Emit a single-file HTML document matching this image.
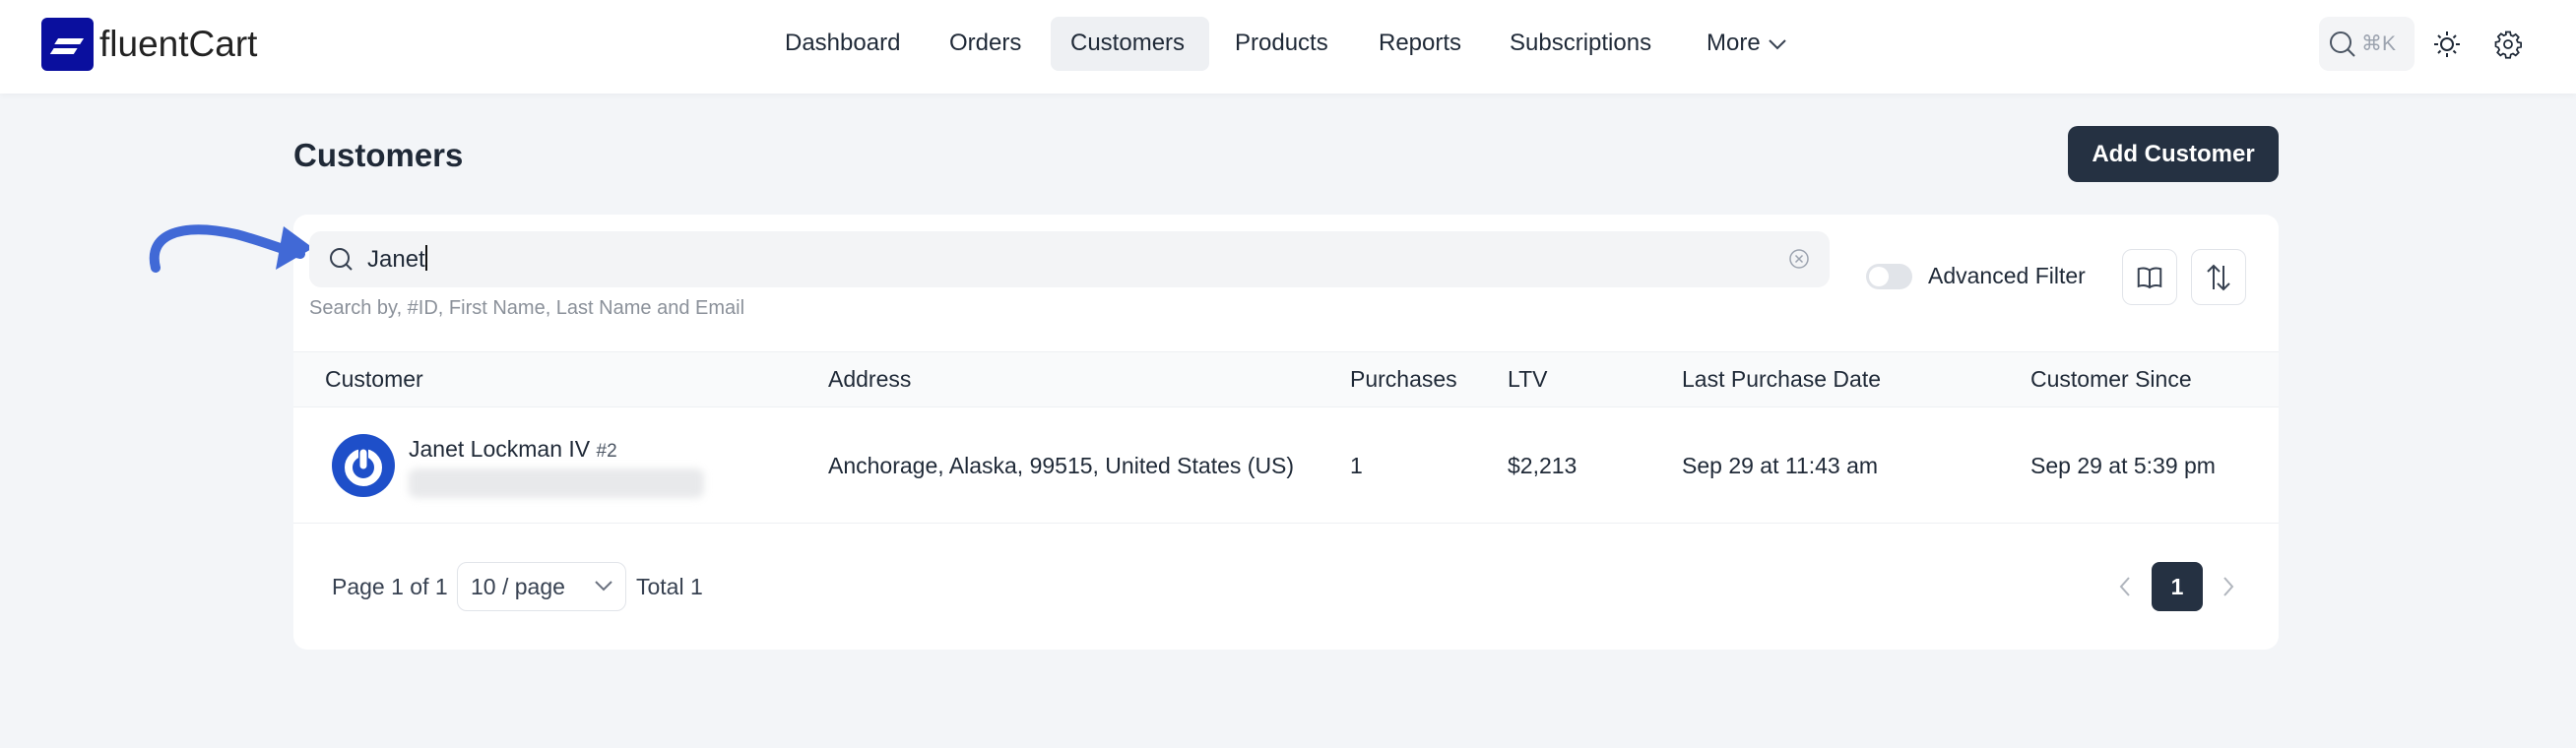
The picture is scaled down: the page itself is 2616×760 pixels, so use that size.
<!DOCTYPE html>
<html><head><meta charset="utf-8"><style>
*{box-sizing:border-box;margin:0;padding:0}
body{width:2616px;height:760px;background:#f3f5f8;font-family:"Liberation Sans",sans-serif;color:#1f2937;position:relative;overflow:hidden}
.abs{position:absolute}
.hdr{left:0;top:0;width:2616px;height:95px;background:#fff;box-shadow:0 2px 6px rgba(0,0,0,.04)}
.nav{font-size:24px;color:#1f2937;top:30px;white-space:nowrap}
.card{left:298px;top:218px;width:2016px;height:442px;background:#fff;border-radius:14px}
.th{font-size:23px;color:#1f2937;top:372px}
.td{font-size:23px;color:#1f2937;top:460px}
</style></head><body>
<div class="abs hdr"></div>
<div class="abs" style="left:42px;top:18px;width:53px;height:54px;background:#0a0f9e;border-radius:6px">
<svg width="53" height="54" viewBox="0 0 53 54"><path d="M14 21 L40 21 L37 27 L11 27Z M11 31 L35 31 L32 37 L8 37Z" fill="#fff" transform="skewX(-8) translate(6,0)"/></svg></div>
<div class="abs" style="left:101px;top:24px;font-size:37px;color:#222">fluent<span style="font-weight:normal">Cart</span></div>
<div class="abs nav" style="left:797px">Dashboard</div>
<div class="abs nav" style="left:964px">Orders</div>
<div class="abs" style="left:1067px;top:17px;width:161px;height:55px;background:#eef0f3;border-radius:8px"></div>
<div class="abs nav" style="left:1087px">Customers</div>
<div class="abs nav" style="left:1254px">Products</div>
<div class="abs nav" style="left:1400px">Reports</div>
<div class="abs nav" style="left:1533px">Subscriptions</div>
<div class="abs nav" style="left:1733px">More</div>
<svg class="abs" style="left:1795px;top:38px" width="20" height="14"><path d="M2 3 L10 11 L18 3" fill="none" stroke="#374151" stroke-width="2"/></svg>
<div class="abs" style="left:2355px;top:17px;width:97px;height:55px;background:#f3f4f6;border-radius:10px"></div>
<svg class="abs" style="left:2364px;top:30px" width="30" height="30"><circle cx="13" cy="13" r="10" fill="none" stroke="#4b5563" stroke-width="2"/><path d="M20 20 L27 27" stroke="#4b5563" stroke-width="2"/></svg>
<div class="abs" style="left:2398px;top:32px;font-size:21px;color:#9ca3af">⌘K</div>
<svg class="abs" style="left:2470px;top:30px" width="30" height="30"><circle cx="15" cy="15" r="6" fill="none" stroke="#1f2937" stroke-width="2"/><g stroke="#1f2937" stroke-width="2"><path d="M15 2v4M15 24v4M2 15h4M24 15h4M6 6l2.5 2.5M21.5 21.5L24 24M6 24l2.5-2.5M21.5 8.5L24 6"/></g></svg>
<svg class="abs" style="left:2532px;top:30px" width="30" height="30" viewBox="0 0 24 24"><path d="M10.3 2h3.4l.5 2.6 1.8.8 2.2-1.5 2.4 2.4-1.5 2.2.8 1.8 2.6.5v3.4l-2.6.5-.8 1.8 1.5 2.2-2.4 2.4-2.2-1.5-1.8.8-.5 2.6h-3.4l-.5-2.6-1.8-.8-2.2 1.5-2.4-2.4 1.5-2.2-.8-1.8L2 13.7v-3.4l2.6-.5.8-1.8-1.5-2.2 2.4-2.4 2.2 1.5 1.8-.8z" fill="none" stroke="#1f2937" stroke-width="1.4"/><circle cx="12" cy="12" r="3.2" fill="none" stroke="#1f2937" stroke-width="1.4"/></svg>

<div class="abs" style="left:298px;top:139px;font-size:33px;font-weight:bold;color:#1f2937">Customers</div>
<div class="abs" style="left:2100px;top:128px;width:214px;height:57px;background:#253142;border-radius:10px;color:#fff;font-size:24px;font-weight:bold;text-align:center;line-height:57px">Add Customer</div>

<div class="abs card"></div>
<svg class="abs" style="left:140px;top:210px" width="190" height="80"><path d="M18 62 C10 30 40 15 100 28 C130 36 150 45 165 48" fill="none" stroke="#4169d6" stroke-width="10" stroke-linecap="round"/><path d="M148 20 L178 42 L140 64Z" fill="#4169d6"/></svg>
<div class="abs" style="left:314px;top:235px;width:1544px;height:57px;background:#f3f4f6;border-radius:12px"></div>
<svg class="abs" style="left:332px;top:249px" width="30" height="30"><circle cx="13" cy="13" r="9" fill="none" stroke="#374151" stroke-width="2"/><path d="M19.5 19.5 L25 25" stroke="#374151" stroke-width="2"/></svg>
<div class="abs" style="left:373px;top:249px;font-size:24px;color:#1f2937">Janet<span style="display:inline-block;width:2px;height:26px;background:#111;vertical-align:-4px"></span></div>
<svg class="abs" style="left:1815px;top:251px" width="24" height="24"><circle cx="12" cy="12" r="9" fill="none" stroke="#9ca3af" stroke-width="1.5"/><path d="M8.5 8.5l7 7M15.5 8.5l-7 7" stroke="#9ca3af" stroke-width="1.5"/></svg>
<div class="abs" style="left:314px;top:302px;font-size:20px;color:#8b919a">Search by, #ID, First Name, Last Name and Email</div>
<div class="abs" style="left:1895px;top:268px;width:47px;height:26px;background:#e1e4e9;border-radius:13px"><div style="position:absolute;left:3px;top:3px;width:20px;height:20px;background:#fff;border-radius:50%"></div></div>
<div class="abs" style="left:1958px;top:267px;font-size:23px;color:#1f2937">Advanced Filter</div>
<div class="abs" style="left:2155px;top:253px;width:56px;height:57px;border:1px solid #e1e4e9;border-radius:10px"></div>
<svg class="abs" style="left:2168px;top:267px" width="30" height="30" viewBox="0 0 24 24"><path d="M12 6 C9 4 6 4 3 5 V19 C6 18 9 18 12 20 C15 18 18 18 21 19 V5 C18 4 15 4 12 6Z M12 6V20" fill="none" stroke="#374151" stroke-width="1.6"/></svg>
<div class="abs" style="left:2225px;top:253px;width:56px;height:57px;border:1px solid #e1e4e9;border-radius:10px"></div>
<svg class="abs" style="left:2238px;top:266px" width="30" height="32"><path d="M10 28V4M4 10l6-6 6 6M20 4v24M14 22l6 6 6-6" fill="none" stroke="#374151" stroke-width="2"/></svg>

<div class="abs" style="left:298px;top:357px;width:2016px;height:57px;background:#f9fafb;border-top:1px solid #eef0f3;border-bottom:1px solid #eef0f3"></div>
<div class="abs th" style="left:330px">Customer</div>
<div class="abs th" style="left:841px">Address</div>
<div class="abs th" style="left:1371px">Purchases</div>
<div class="abs th" style="left:1531px">LTV</div>
<div class="abs th" style="left:1708px">Last Purchase Date</div>
<div class="abs th" style="left:2062px">Customer Since</div>

<svg class="abs" style="left:336px;top:440px" width="66" height="66"><circle cx="33" cy="33" r="32" fill="#1e4fc9"/><circle cx="33" cy="35" r="15" fill="none" stroke="#fff" stroke-width="8"/><path d="M33 14 V33" stroke="#1e4fc9" stroke-width="10"/><path d="M33 20 V33" stroke="#fff" stroke-width="7" stroke-linecap="round"/></svg>
<div class="abs" style="left:415px;top:443px;font-size:23px;color:#1f2937">Janet Lockman IV <span style="font-size:19px;color:#4b5563">#2</span></div>
<div class="abs" style="left:415px;top:476px;width:300px;height:30px;background:#e8e9eb;border-radius:8px;filter:blur(4px)"></div>
<div class="abs td" style="left:841px">Anchorage, Alaska, 99515, United States (US)</div>
<div class="abs td" style="left:1371px">1</div>
<div class="abs td" style="left:1531px">$2,213</div>
<div class="abs td" style="left:1708px">Sep 29 at 11:43 am</div>
<div class="abs td" style="left:2062px">Sep 29 at 5:39 pm</div>
<div class="abs" style="left:298px;top:531px;width:2016px;height:1px;background:#eef0f3"></div>

<div class="abs" style="left:337px;top:583px;font-size:23px;color:#374151">Page 1 of 1</div>
<div class="abs" style="left:464px;top:571px;width:172px;height:50px;border:1px solid #e1e4e9;border-radius:10px"></div>
<div class="abs" style="left:478px;top:583px;font-size:23px;color:#374151">10 / page</div>
<svg class="abs" style="left:603px;top:588px" width="20" height="14"><path d="M2 3 L10 11 L18 3" fill="none" stroke="#6b7280" stroke-width="2"/></svg>
<div class="abs" style="left:646px;top:583px;font-size:23px;color:#374151">Total 1</div>
<svg class="abs" style="left:2150px;top:584px" width="16" height="24"><path d="M12 3 L4 12 L12 21" fill="none" stroke="#b0b5bd" stroke-width="2"/></svg>
<div class="abs" style="left:2185px;top:571px;width:52px;height:50px;background:#253142;border-radius:8px;color:#fff;font-size:23px;font-weight:bold;text-align:center;line-height:50px">1</div>
<svg class="abs" style="left:2255px;top:584px" width="16" height="24"><path d="M4 3 L12 12 L4 21" fill="none" stroke="#b0b5bd" stroke-width="2"/></svg>
</body></html>
